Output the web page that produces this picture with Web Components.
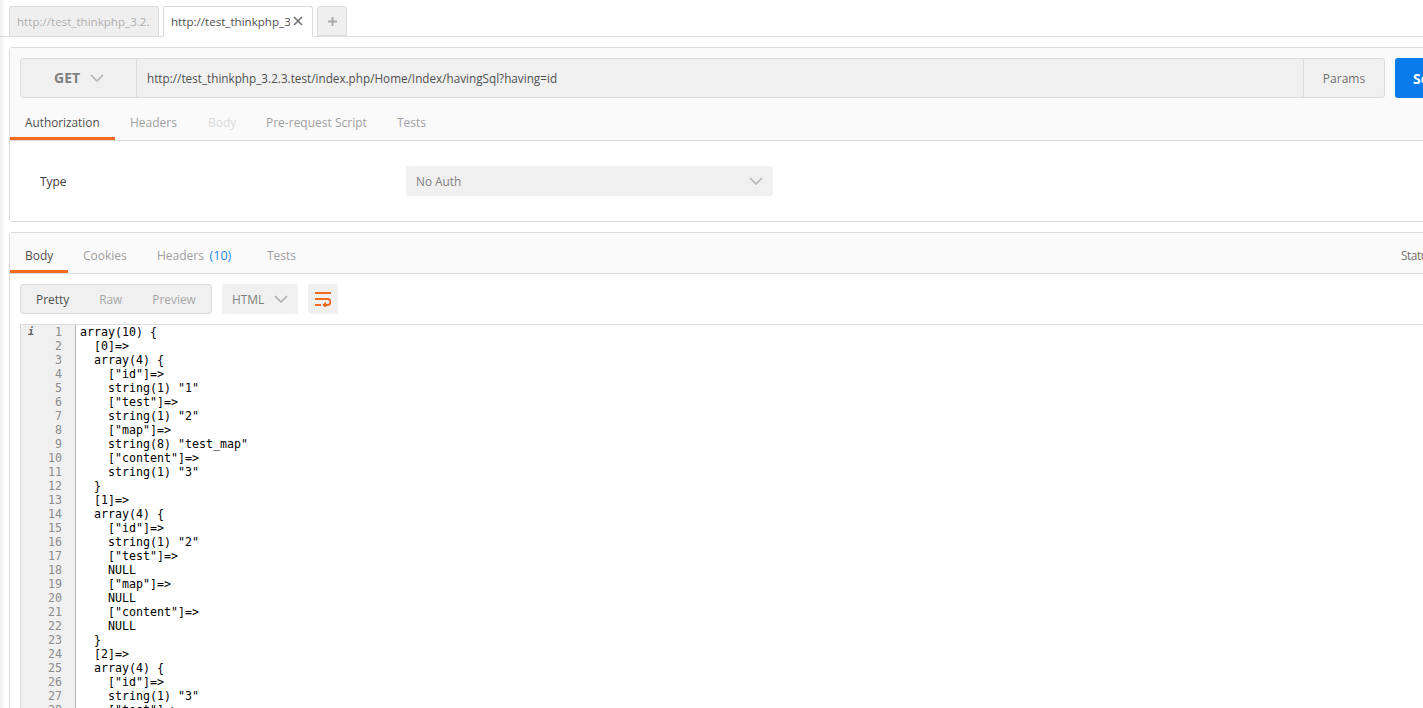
<!DOCTYPE html>
<html><head><meta charset="utf-8">
<style>
html,body{margin:0;height:708px;overflow:hidden;background:#fff;font-family:"Open Sans",sans-serif;font-size:11.9px;color:#505050}
</style></head><body>
<pm-app></pm-app>
<script>
function def(name,css,html){
  customElements.define(name,class extends HTMLElement{
    constructor(){super();const r=this.attachShadow({mode:'open'});r.innerHTML='<style>'+css+'</style>'+(typeof html==='function'?html(this):html);}
  });
}
const chev=(c,w=14,h=8)=>`<svg width="${w}" height="${h}" viewBox="0 0 14 8" fill="none" stroke="${c}" stroke-width="1.7"><path d="M1 1l6 6 6-6"/></svg>`;

def('pm-tabbar',`
:host{display:flex;height:37px;box-sizing:border-box;padding:6px 0 0 9px;gap:4px;border-bottom:1px solid #dcdcdc;align-items:flex-start}
.t{box-sizing:border-box;height:31px;width:150px;border:1px solid #dcdcdc;border-radius:3px 3px 0 0;background:#efefef;color:#b0b0b0;display:flex;align-items:center;padding:0 7px 1px;white-space:nowrap;overflow:hidden;font-size:11.6px}
.t span{overflow:hidden;flex:1;display:block}
.a{background:#fff;color:#505050;border-bottom-color:#fff}
.a span{flex:none;width:119px}
.a svg{margin-left:3px;flex:none}
.p{width:30px;justify-content:center;padding:0;height:30px}
`,`<div class="t"><span>http://test_thinkphp_3.2.3</span></div>
<div class="t a"><span>http://test_thinkphp_3.2.3</span><svg width="10" height="10" viewBox="0 0 10 10" stroke="#707070" stroke-width="1.6"><path d="M1 1l8 8M9 1l-8 8"/></svg></div>
<div class="t p"><svg width="9" height="9" viewBox="0 0 9 9" stroke="#a8a8a8" stroke-width="2"><path d="M4.5 0v9M0 4.5h9"/></svg></div>`);

def('pm-card',`
:host{display:block;box-sizing:border-box;margin-left:9px;width:1500px;border:1px solid #dcdcdc;border-radius:3px;background:#fff}
`,`<slot></slot>`);

def('pm-urlbar',`
:host{display:flex;padding:10px 10px 2px;gap:10px;background:#fafafa;height:40px}
.g{display:flex;height:40px;box-sizing:border-box;border:1px solid #dcdcdc;border-radius:3px;background:#f0f0f0;flex:none;width:1365px}
.m{box-sizing:border-box;width:116px;border-right:1px solid #dcdcdc;display:flex;align-items:center;padding-left:33px;gap:10px;font-weight:700;color:#808080;font-size:14px;line-height:1}
.u{flex:1;display:flex;align-items:center;padding-left:10px;color:#505050;font-size:11.72px;white-space:nowrap}
.p{box-sizing:border-box;width:81px;border-left:1px solid #dcdcdc;display:flex;align-items:center;justify-content:center;color:#707070;font-size:12px}
.s{box-sizing:border-box;width:100px;height:40px;background:#097bed;border-radius:3px;color:#fff;font-weight:700;font-size:14px;display:flex;align-items:center;padding-left:18px;flex:none}
`,`<div class="g"><div class="m">GET ${chev('#b8b8b8')}</div><div class="u">http://test_thinkphp_3.2.3.test/index.php/Home/Index/havingSql?having=id</div><div class="p">Params</div></div><div class="s">Send</div>`);

def('pm-tabs',`
:host{display:flex;height:41px;box-sizing:border-box;background:#fafafa;border-bottom:1px solid #dcdcdc;align-items:flex-start;position:relative}
`,`<slot></slot>`);

def('pm-tab',`
:host{display:flex;box-sizing:border-box;align-items:center;padding:7px 0 0 15px;color:#a0a0a0;font-size:12px;border-bottom:3px solid transparent;height:40px;white-space:nowrap}
:host([active]){color:#505050;border-bottom-color:#f26b21}
:host([dim]){color:#dcdcdc}
`,`<slot></slot>`);

def('pm-request',`
:host{display:block}
.auth{display:flex;height:80px;padding-top:25px;box-sizing:border-box;background:#fff}
.l{width:396px;padding:0 0 0 30px;height:30px;line-height:31px;font-weight:500;color:#3c3c3c;flex:none;box-sizing:border-box}
.sel{box-sizing:border-box;width:367px;height:30px;background:#f0f0f0;border-radius:3px;display:flex;align-items:center;justify-content:space-between;padding:0 10px;color:#808080;font-size:11.8px}
`,`<pm-urlbar></pm-urlbar><pm-tabs><pm-tab active style="width:105px;font-size:11.8px">Authorization</pm-tab><pm-tab style="width:78px">Headers</pm-tab><pm-tab dim style="width:58px">Body</pm-tab><pm-tab style="width:131px">Pre-request Script</pm-tab><pm-tab style="width:60px">Tests</pm-tab></pm-tabs>
<div class="auth"><div class="l">Type</div><div class="sel">No Auth ${chev('#b8b8b8')}</div></div>`);

def('pm-toolbar',`
:host{display:flex;height:50px;box-sizing:border-box;padding:10px 10px 0;gap:10px;background:#fff}
.g{box-sizing:border-box;height:30px;width:192px;border:1px solid #dcdcdc;border-radius:3px;background:#f0f0f0;display:flex;align-items:center;color:#a8a8a8}
.g span{padding:0 15px}
.g span:first-child{color:#505050}
.h{box-sizing:border-box;height:30px;width:76px;background:#f0f0f0;border-radius:3px;display:flex;align-items:center;justify-content:space-between;padding:0 10px;color:#808080}
.w{width:30px;height:30px;background:#f0f0f0;border-radius:3px;display:flex;align-items:center;justify-content:center}
`,`<div class="g"><span>Pretty</span><span>Raw</span><span>Preview</span></div>
<div class="h">HTML ${chev('#b0b0b0')}</div>
<div class="w"><svg width="16" height="15" viewBox="0 0 16 15" fill="none" stroke="#f26b21" stroke-width="2"><path d="M0 1h16M0 13h6M0 7h12.5a3 3 0 0 1 0 6H9"/><path d="M11 10.5L8.5 13l2.5 2.2" stroke-width="1.6"/></svg></div>`);

const code=`array(10) {
  [0]=>
  array(4) {
    ["id"]=>
    string(1) "1"
    ["test"]=>
    string(1) "2"
    ["map"]=>
    string(8) "test_map"
    ["content"]=>
    string(1) "3"
  }
  [1]=>
  array(4) {
    ["id"]=>
    string(1) "2"
    ["test"]=>
    NULL
    ["map"]=>
    NULL
    ["content"]=>
    NULL
  }
  [2]=>
  array(4) {
    ["id"]=>
    string(1) "3"
    ["test"]=>`.split('\n');

def('pm-code',`
:host{display:flex;height:384px;overflow:hidden;margin-left:10px;border-top:1px solid #dcdcdc;font-family:"DejaVu Sans Mono",monospace;font-size:11.63px;line-height:14px;background:#fff}
.gut{box-sizing:border-box;width:56px;background:#f0f0f0;border-right:1px solid #b8b8b8;border-left:1px solid #dcdcdc;flex:none;position:relative;color:#8c8c8c;text-align:right}
.n{padding-right:13px;height:14px}
.i{position:absolute;left:7px;top:0;color:#606060;font-weight:700;font-style:italic;font-size:10px}
pre{margin:0;padding:0 0 0 4px;color:#000;font:inherit;white-space:pre}
`,()=>`<div class="gut"><span class="i">i</span>${code.map((_,i)=>`<div class="n">${i+1}</div>`).join('')}</div><pre>${code.join('\n').replace(/</g,'&lt;')}</pre>`);

def('pm-response',`
:host{display:block}
.b{color:#1f8ceb;margin-left:5.5px;font-size:12.6px}
.st{position:absolute;left:1391px;top:0;height:37px;display:flex;align-items:center;padding-top:7px;box-sizing:border-box;color:#707070;font-size:11.8px;letter-spacing:-.4px}
`,`<pm-tabs><pm-tab active style="width:58px">Body</pm-tab><pm-tab style="width:74px">Cookies</pm-tab><pm-tab style="width:110px">Headers<span class="b">(10)</span></pm-tab><pm-tab style="width:60px">Tests</pm-tab><span class="st">Status</span></pm-tabs>
<pm-toolbar></pm-toolbar><pm-code></pm-code>`);

def('pm-app',`
:host{display:block;width:1423px;height:708px;overflow:hidden;position:relative;background:#fff}
:host::before{content:"";position:absolute;left:0;top:0;bottom:0;width:6px;background:linear-gradient(90deg,rgba(0,0,0,.06),rgba(0,0,0,0));pointer-events:none}
.c{display:block;margin-top:10px}
.r{height:800px}
`,`<pm-tabbar></pm-tabbar><pm-card class="c"><pm-request></pm-request></pm-card><pm-card class="c r"><pm-response></pm-response></pm-card>`);
</script>
</body></html>
